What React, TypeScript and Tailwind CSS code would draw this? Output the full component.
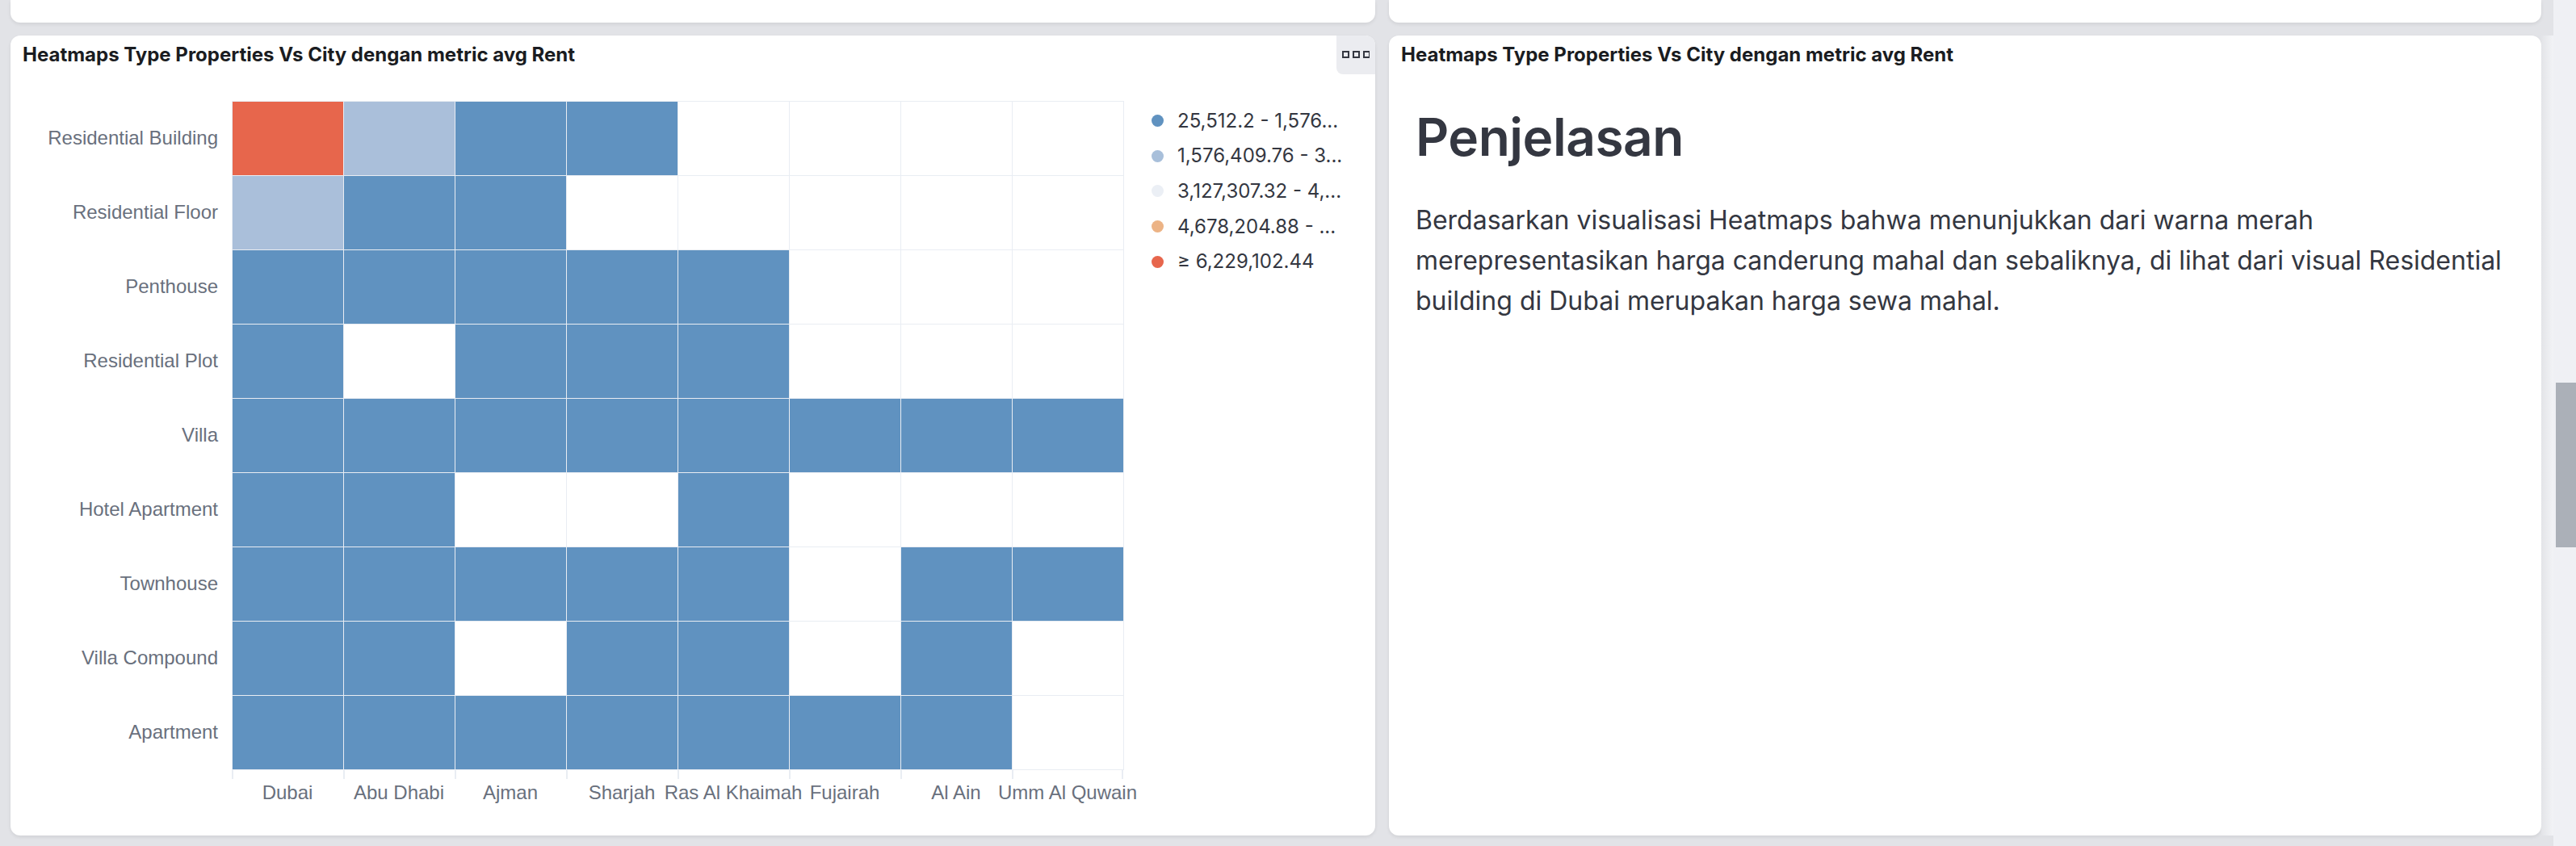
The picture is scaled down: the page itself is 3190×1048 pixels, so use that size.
import React from "react";

type Cell = "r" | "l" | "b" | null;

const cities = ["Dubai", "Abu Dhabi", "Ajman", "Sharjah", "Ras Al Khaimah", "Fujairah", "Al Ain", "Umm Al Quwain"];

const rows: { label: string; cells: Cell[] }[] = [
  { label: "Residential Building", cells: ["r", "l", "b", "b", null, null, null, null] },
  { label: "Residential Floor", cells: ["l", "b", "b", null, null, null, null, null] },
  { label: "Penthouse", cells: ["b", "b", "b", "b", "b", null, null, null] },
  { label: "Residential Plot", cells: ["b", null, "b", "b", "b", null, null, null] },
  { label: "Villa", cells: ["b", "b", "b", "b", "b", "b", "b", "b"] },
  { label: "Hotel Apartment", cells: ["b", "b", null, null, "b", null, null, null] },
  { label: "Townhouse", cells: ["b", "b", "b", "b", "b", null, "b", "b"] },
  { label: "Villa Compound", cells: ["b", "b", null, "b", "b", null, "b", null] },
  { label: "Apartment", cells: ["b", "b", "b", "b", "b", "b", "b", null] },
];

const cellClass: Record<string, string> = {
  r: "bg-[#e7664c]",
  l: "bg-[#aabfda]",
  b: "bg-[#6092c0]",
  none: "bg-white",
};

const legend = [
  { color: "bg-[#6092c0]", text: "25,512.2 - 1,576..." },
  { color: "bg-[#a8bfda]", text: "1,576,409.76 - 3..." },
  { color: "bg-[#ebeff5]", text: "3,127,307.32 - 4,..." },
  { color: "bg-[#ecb385]", text: "4,678,204.88 - ..." },
  { color: "bg-[#e7664c]", text: "≥ 6,229,102.44" },
];

const title = "Heatmaps Type Properties Vs City dengan metric avg Rent";

function PanelTitle() {
  return (
    <div className="h-[48px] px-[15px] flex items-center">
      <span className="text-[24px] leading-[32px] font-bold text-[#1a1c21] font-['Inter',sans-serif]">
        {title}
      </span>
    </div>
  );
}

function MenuIcon() {
  return (
    <svg width="34" height="10" viewBox="0 0 34 10" fill="none">
      <rect x="1" y="1" width="7" height="7" stroke="#343741" strokeWidth="2" />
      <rect x="14" y="1" width="7" height="7" stroke="#343741" strokeWidth="2" />
      <rect x="27" y="1" width="7" height="7" stroke="#343741" strokeWidth="2" />
    </svg>
  );
}

function Heatmap() {
  return (
    <div className="flex mt-[33px] pl-[15px] font-['Liberation_Sans',Arial,sans-serif]">
      {/* y axis labels */}
      <div className="w-[259px] flex flex-col">
        {rows.map((row) => (
          <div key={row.label} className="h-[92px] flex items-center justify-end pr-[17px] text-[24px] text-[#69707d]">
            {row.label}
          </div>
        ))}
      </div>

      <div className="flex flex-col">
        <div className="grid grid-cols-[repeat(8,137px)] gap-px bg-[#e9edf3] border border-[#e9edf3] w-[1105px]">
          {rows.map((row) =>
            row.cells.map((c, i) => (
              <div key={row.label + i} className={`h-[91px] ${cellClass[c ?? "none"]}`} />
            ))
          )}
        </div>
        {/* ticks */}
        <div className="flex w-[1105px]">
          {cities.map((c, i) => (
            <div
              key={c}
              className={`h-[11px] w-[138px] border-l-2 border-[#e9edf3] ${i === cities.length - 1 ? "border-r-2" : ""}`}
            />
          ))}
        </div>
        <div className="flex mt-[3px] w-[1105px]">
          {cities.map((c) => (
            <div key={c} className="w-[138px] flex justify-center text-[24px] leading-[28px] text-[#69707d] whitespace-nowrap">
              {c}
            </div>
          ))}
        </div>
      </div>

      {/* legend */}
      <div className="ml-[34px] mt-[3px] flex flex-col font-['Inter',sans-serif]">
        {legend.map((l) => (
          <div key={l.text} className="h-[43.6px] flex items-center gap-[17px]">
            <span className={`w-[15px] h-[15px] rounded-full ${l.color}`} />
            <span className="text-[24px] text-[#343741] whitespace-nowrap">{l.text}</span>
          </div>
        ))}
      </div>
    </div>
  );
}

export default function App() {
  return (
    <div className="w-[3190px] h-[1048px] flex overflow-hidden bg-[#e2e3e7]">
      <div className="w-[3162px] shrink-0 flex flex-col pl-[13px]">
        {/* top row, mostly scrolled away */}
        <div className="h-[28px] flex gap-[17px]">
          <div className="w-[1690px] bg-white rounded-b-[12px] shadow-[0_2px_4px_rgba(0,0,0,0.08)]" />
          <div className="w-[1427px] bg-white rounded-b-[12px] shadow-[0_2px_4px_rgba(0,0,0,0.08)]" />
        </div>

        <div className="mt-[16px] h-[991px] flex">
          <div className="flex gap-[17px]">
            <div className="relative w-[1690px] bg-white rounded-[12px] shadow-[0_2px_4px_rgba(0,0,0,0.08)]">
              <PanelTitle />
              <button className="absolute top-0 right-0 w-[48px] h-[48px] bg-[#ebecf0] rounded-bl-[8px] rounded-tr-[12px] flex items-center justify-center">
                <MenuIcon />
              </button>
              <Heatmap />
            </div>

            <div className="w-[1427px] bg-white rounded-[12px] shadow-[0_2px_4px_rgba(0,0,0,0.08)]">
              <PanelTitle />
              <div className="px-[33px] mt-[38px] font-['Inter',sans-serif] text-[#343741]">
                <h1 className="text-[64px] leading-[80px] font-semibold tracking-[-0.5px]">Penjelasan</h1>
                <p className="mt-[38px] text-[32px] leading-[50px]">
                  Berdasarkan visualisasi Heatmaps bahwa menunjukkan dari warna merah merepresentasikan harga canderung
                  mahal dan sebaliknya, di lihat dari visual Residential building di Dubai merupakan harga sewa mahal.
                </p>
              </div>
            </div>
          </div>
          <div className="w-[15px] bg-gradient-to-r from-[#e3e4e8] to-[#f2f3f6]" />
        </div>
      </div>

      {/* scrollbar */}
      <div className="w-[28px] bg-[#eff0f4] pl-[3px]">
        <div className="mt-[474px] h-[204px] bg-[#abb0b8]" />
      </div>
    </div>
  );
}
